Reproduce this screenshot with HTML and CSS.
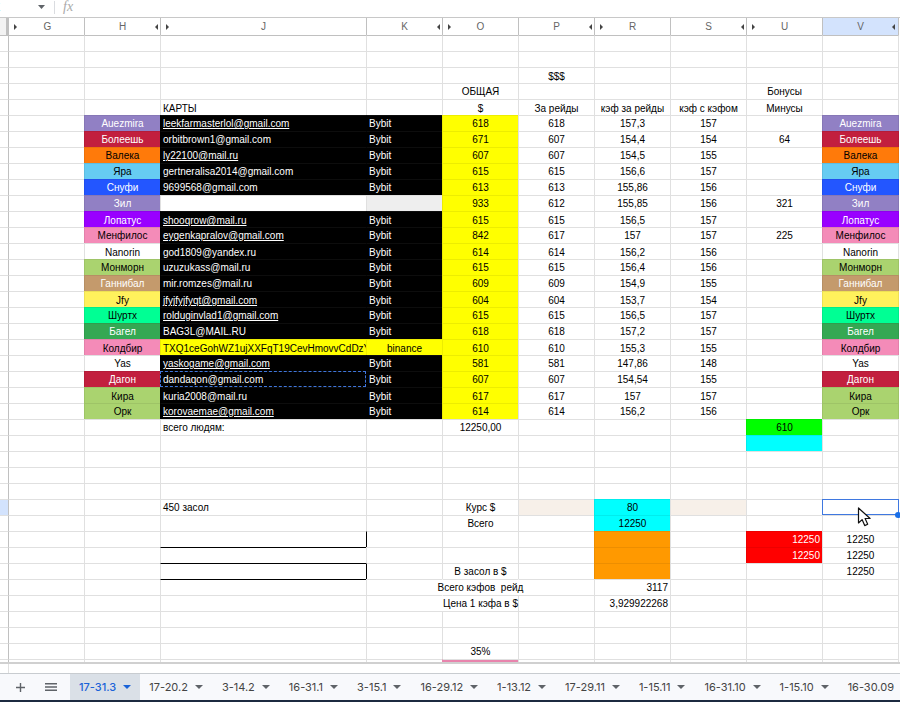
FILE: index.html
```html
<!DOCTYPE html>
<html lang="ru">
<head>
<meta charset="utf-8">
<title>Таблица</title>
<link rel="stylesheet" href="styles.css">
</head>
<body>
<header class="formula">
  <span class="cellname">E</span>
  <svg class="drop" width="7" height="4" viewBox="0 0 7 4"><path d="M0 0h7L3.5 4z"/></svg>
  <span class="sep"></span>
  <span class="fx">fx</span>
</header>
<main class="sheet">
<table>
<colgroup><col class="c0"><col class="cn"><col class="cn"><col class="cj"><col class="cn"><col class="cn"><col class="cn"><col class="cn"><col class="cn"><col class="cn"><col class="cv"></colgroup>
<thead><tr><th class="corner"></th><th class="ar5">G</th><th class="al">H</th><th class="ar">J</th><th class="al">K</th><th class="ar">O</th><th class="al">P</th><th class="ar">R</th><th class="al">S</th><th class="ar">U</th><th class="al selh">V</th></tr></thead>
<tbody>
<tr><td class="rh"><td><td><td><td><td><td><td><td><td><td class="vc"></tr>
<tr><td class="rh"><td><td><td><td><td><td><td><td><td><td class="vc"></tr>
<tr class="low"><td class="rh"><td><td><td><td><td><td>$$$<td><td><td><td class="vc"></tr>
<tr><td class="rh"><td><td><td><td><td>ОБЩАЯ<td><td><td><td>Бонусы<td class="vc"></tr>
<tr class="low"><td class="rh"><td><td><td class="l">КАРТЫ<td><td>$<td>За рейды<td>кэф за рейды<td>кэф с кэфом<td>Минусы<td class="vc"></tr>
<tr><td class="rh"><td><td class="purple">Auezmira<td class="k l"><u>leekfarmasterlol@gmail.com</u><td class="k l">Bybit<td class="y">618<td>618<td>157,3<td>157<td><td class="vc purple">Auezmira</tr>
<tr><td class="rh"><td><td class="crimson">Болеешь<td class="k l">orbitbrown1@gmail.com<td class="k l">Bybit<td class="y">671<td>607<td>154,4<td>154<td>64<td class="vc crimson">Болеешь</tr>
<tr><td class="rh"><td><td class="orange">Валека<td class="k l"><u>ly22100@mail.ru</u><td class="k l">Bybit<td class="y">607<td>607<td>154,5<td>155<td><td class="vc orange">Валека</tr>
<tr><td class="rh"><td><td class="sky">Яра<td class="k l">gertneralisa2014@gmail.com<td class="k l">Bybit<td class="y">615<td>615<td>156,6<td>157<td><td class="vc sky">Яра</tr>
<tr><td class="rh"><td><td class="blue">Снуфи<td class="k l">9699568@gmail.com<td class="k l">Bybit<td class="y">613<td>613<td>155,86<td>156<td><td class="vc blue">Снуфи</tr>
<tr><td class="rh"><td><td class="purple">Зил<td class="blank"><td class="grey"><td class="y">933<td>612<td>155,85<td>156<td>321<td class="vc purple">Зил</tr>
<tr class="low"><td class="rh"><td><td class="violet">Лопатус<td class="k l"><u>shooqrow@mail.ru</u><td class="k l">Bybit<td class="y">615<td>615<td>156,5<td>157<td><td class="vc violet">Лопатус</tr>
<tr><td class="rh"><td><td class="pink">Менфилос<td class="k l"><u>eygenkapralov@gmail.com</u><td class="k l">Bybit<td class="y">842<td>617<td>157<td>157<td>225<td class="vc pink">Менфилос</tr>
<tr class="low"><td class="rh"><td><td>Nanorin<td class="k l">god1809@yandex.ru<td class="k l">Bybit<td class="y">614<td>614<td>156,2<td>156<td><td class="vc">Nanorin</tr>
<tr><td class="rh"><td><td class="green">Монморн<td class="k l">uzuzukass@mail.ru<td class="k l">Bybit<td class="y">615<td>615<td>156,4<td>156<td><td class="vc green">Монморн</tr>
<tr><td class="rh"><td><td class="tan">Ганнибал<td class="k l">mir.romzes@mail.ru<td class="k l">Bybit<td class="y">609<td>609<td>154,9<td>155<td><td class="vc tan">Ганнибал</tr>
<tr class="low"><td class="rh"><td><td class="lemon">Jfy<td class="k l"><u>jfyjfyjfyqt@gmail.com</u><td class="k l">Bybit<td class="y">604<td>604<td>153,7<td>154<td><td class="vc lemon">Jfy</tr>
<tr><td class="rh"><td><td class="mint">Шуртх<td class="k l"><u>rolduginvlad1@gmail.com</u><td class="k l">Bybit<td class="y">615<td>615<td>156,5<td>157<td><td class="vc mint">Шуртх</tr>
<tr><td class="rh"><td><td class="leaf">Багел<td class="k l">BAG3L@MAIL.RU<td class="k l">Bybit<td class="y">618<td>618<td>157,2<td>157<td><td class="vc leaf">Багел</tr>
<tr class="low"><td class="rh"><td><td class="pink">Колдбир<td class="y l">TXQ1ceGohWZ1ujXXFqT19CevHmovvCdDzY<td class="y">binance<td class="y">610<td>610<td>155,3<td>155<td><td class="vc pink">Колдбир</tr>
<tr><td class="rh"><td><td>Yas<td class="k l"><u>yaskogame@gmail.com</u><td class="k l">Bybit<td class="y">581<td>581<td>147,86<td>148<td><td class="vc">Yas</tr>
<tr><td class="rh"><td><td class="crimson">Дагон<td class="k l dash">dandaqon@gmail.com<td class="k l">Bybit<td class="y">607<td>607<td>154,54<td>155<td><td class="vc crimson">Дагон</tr>
<tr class="low"><td class="rh"><td><td class="green">Кира<td class="k l">kuria2008@mail.ru<td class="k l">Bybit<td class="y">617<td>617<td>157<td>157<td><td class="vc green">Кира</tr>
<tr><td class="rh"><td><td class="green">Орк<td class="k l"><u>korovaemae@gmail.com</u><td class="k l">Bybit<td class="y">614<td>614<td>156,2<td>156<td><td class="vc green">Орк</tr>
<tr><td class="rh"><td><td><td class="l">всего людям:<td><td>12250,00<td><td><td><td class="lime">610<td class="vc"></tr>
<tr><td class="rh"><td><td><td><td><td><td><td><td><td class="cyan"><td class="vc"></tr>
<tr><td class="rh"><td><td><td><td><td><td><td><td><td><td class="vc"></tr>
<tr><td class="rh"><td><td><td><td><td><td><td><td><td><td class="vc"></tr>
<tr><td class="rh"><td><td><td><td><td><td><td><td><td><td class="vc"></tr>
<tr><td class="rh selr"><td><td><td class="l">450 засол<td><td>Курс $<td class="beige"><td class="cyan">80<td class="beige"><td><td class="vc sel"><span class="handle"></span><svg class="cursor" width="14" height="20" viewBox="0 0 14 20"><path d="M1.5 1v15l3.6-3.4 2.6 6 3-1.3-2.6-5.8h5z"/></svg></tr>
<tr><td class="rh"><td><td><td><td><td>Всего<td><td class="cyan">12250<td><td><td class="vc"></tr>
<tr><td class="rh"><td><td><td><td class="lb"><td><td><td class="amber"><td><td class="red r">12250<td class="vc">12250</tr>
<tr><td class="rh"><td><td><td class="tb"><td><td><td><td class="amber"><td><td class="red r">12250<td class="vc">12250</tr>
<tr><td class="rh"><td><td><td class="tb"><td class="lb"><td>В засол в $<td><td class="amber"><td><td><td class="vc">12250</tr>
<tr><td class="rh"><td><td><td class="tb"><td><td class="nl wide"><span class="over">Всего кэфов&nbsp; рейд</span><td class="nl"><td class="r">3117<td><td><td class="vc"></tr>
<tr><td class="rh"><td><td><td><td><td class="nl wide"><span class="over">Цена 1 кэфа в $</span><td><td class="r">3,929922268<td><td><td class="vc"></tr>
<tr><td class="rh"><td><td><td><td><td><td><td><td><td><td class="vc"></tr>
<tr><td class="rh"><td><td><td><td><td><td><td><td><td><td class="vc"></tr>
<tr><td class="rh"><td><td><td><td><td>35%<td><td><td><td><td class="vc"></tr>
<tr><td class="rh"><td><td><td><td><td class="rose"><td><td><td><td><td class="vc"></tr>
</tbody>
</table>
</main>
<div class="scroll"><span class="thumb"></span></div>
<nav class="tabs">
  <span class="btn plus"><svg width="9" height="9" viewBox="0 0 9 9"><path d="M4.5 0v9M0 4.5h9"/></svg></span>
  <span class="btn menu"><svg width="12" height="8" viewBox="0 0 12 8"><path d="M0 .75h12M0 4h12M0 7.25h12"/></svg></span>
  <span class="tab active">17-31.3<i></i></span>
  <span class="tab">17-20.2<i></i></span>
  <span class="tab">3-14.2<i></i></span>
  <span class="tab">16-31.1<i></i></span>
  <span class="tab">3-15.1<i></i></span>
  <span class="tab">16-29.12<i></i></span>
  <span class="tab">1-13.12<i></i></span>
  <span class="tab">17-29.11<i></i></span>
  <span class="tab">1-15.11<i></i></span>
  <span class="tab">16-31.10<i></i></span>
  <span class="tab">1-15.10<i></i></span>
  <span class="tab">16-30.09</span>
</nav>
<div class="strip"></div>
</body>
</html>
```
FILE: styles.css
```css
* { box-sizing: border-box; }
html, body { margin: 0; height: 702px; overflow: hidden; background: #fff; }
body { display: flex; flex-direction: column; font-family: "Liberation Sans", Arial, sans-serif; font-size: 10px; color: #000; }

.formula { height: 18px; flex: none; display: flex; align-items: center; border-bottom: 1px solid #c8c8c8; overflow: hidden; }
.cellname { color: #1a73e8; font-size: 11px; margin-left: -7px; width: 45px; padding-bottom: 3px; }
.drop { fill: #5f6368; margin: 0 0 3px 0; flex: none; }
.sep { width: 1px; height: 13px; background: #dadce0; margin: 0 0 2px 9px; }
.fx { font-family: "Liberation Serif", serif; font-style: italic; font-size: 14px; color: #aaa; margin: 0 0 3px 8px; }

.sheet { height: 644px; flex: none; overflow: hidden; position: relative; }
table { border-collapse: separate; border-spacing: 0; table-layout: fixed; width: 899px; }
.c0 { width: 8px; }
.cn { width: 76px; }
.cj { width: 206px; }
.cv { width: 77px; }

th { height: 17px; padding: 0; position: relative; font-weight: 400; font-size: 10px; color: #666; border-left: 1px solid #c0c0c0; line-height: 14px; vertical-align: middle; }
th.corner { border-left: 0; background: #f3f3f3; border-right: 2px solid #c0c0c0; }
th.selh { background: #d3e3fd; border-right: 1px solid #c0c0c0; }
.ar::before, .ar5::before, .al::after { content: ""; position: absolute; top: 6px; border: 3px solid transparent; border-left-width: 0; border-right-width: 0; }
.ar::before, .ar5::before { border-left: 3px solid #444; }
.al::after { border-right: 3px solid #444; right: 2px; }
.ar::before { left: 5px; }
.ar5::before { left: 5px; }
.ar5 { padding-left: 2px; }
.selh.al::after { right: 3px; }

td { height: 16px; padding: 0 2px; border-top: 1px solid #e0e0e0; border-left: 1px solid #e0e0e0; text-align: center; white-space: nowrap; overflow: hidden; line-height: 15px; vertical-align: top; font-size: 10px; }
tbody tr:first-child td { border-top-color: #c0c0c0; }
td.rh { padding: 0; border-left: 0; }
td.rh + td { border-left-color: #c0c0c0; }
td.selr { background: #d3e3fd; }
td.vc { border-right: 1px solid #e0e0e0; }
.l { text-align: left; }
td.r { text-align: right; }
tr.low td { padding-top: 2px; line-height: 13px; }

.purple, .crimson, .orange, .sky, .blue, .violet, .pink, .green, .tan, .lemon, .mint, .leaf, .y, .k, .lime, .cyan, .amber, .red { border-top-color: rgba(0,0,0,.07); border-left-color: rgba(0,0,0,.07); }
td.vc.purple, td.vc.crimson, td.vc.orange, td.vc.sky, td.vc.blue, td.vc.violet, td.vc.pink, td.vc.green, td.vc.tan, td.vc.lemon, td.vc.mint, td.vc.leaf { border-right-color: rgba(0,0,0,.07); }
.purple { background: #9180c4; color: #fff; }
.crimson { background: #c21f3e; color: #fff; }
.orange { background: #ff7a0a; }
.sky { background: #66ccf2; }
.blue { background: #2356ff; color: #fff; }
.violet { background: #9900ff; color: #fff; }
.pink { background: #f48bb8; }
.green { background: #aad36f; }
.tan { background: #c49a6c; color: #fff; }
.lemon { background: #fff15c; }
.mint { background: #00ff94; }
.leaf { background: #34a853; color: #fff; }
.k { background: #000; color: #fff; border-top-color: #0d0d0d; border-left-color: #000; }
.y { background: #ff0; }
.lime { background: #0f0; }
.cyan { background: #0ff; }
.amber { background: #f90; }
.red { background: #f00; color: #fff; }
.grey { background: #eee; border-top-color: #e0e0e0; }
.blank { background: #fff; }
.beige { background: #f7f0e9; }
.rose { background: #e884ad; border-left-color: #e884ad; }
.lb { border-left-color: #000; }
.tb { border-top-color: #000; }
td.nl { border-left-color: transparent; }

td.dash { overflow: visible; outline: 1px dashed #3f76dc; outline-offset: -1px; position: relative; }
td.sel { overflow: visible; position: relative; outline: 1.5px solid #3f78e0; outline-offset: -1px; z-index: 2; }
td.wide { overflow: visible; }
.over { display: block; margin: 0 -20px; }
.handle { position: absolute; right: -3px; bottom: -3px; width: 6px; height: 6px; border-radius: 50%; background: #1a6fe8; }
.cursor { position: absolute; left: 34px; top: 7px; fill: #fff; stroke: #111; stroke-width: 1.2; stroke-linejoin: round; }

.scroll { height: 12px; flex: none; border-top: 2px solid #d0d0d0; border-bottom: 1px solid #c8ccd0; background: #fff; padding-left: 8px; }
.thumb { display: block; width: 1px; height: 100%; background: #e0e0e0; }

.tabs { height: 26px; flex: none; background: #f8f9fc; display: flex; align-items: stretch; overflow: hidden; }
.btn { display: flex; align-items: center; justify-content: center; flex: none; }
.btn svg { fill: none; stroke: #5f6368; stroke-width: 1.4; }
.plus { width: 40px; }
.menu { width: 22px; margin-right: 8px; }
.tab { display: flex; align-items: center; flex: none; padding: 0 10px 0 9px; font-family: Inter, Roboto, "Liberation Sans", sans-serif; font-size: 11px; font-weight: 400; color: #444; white-space: nowrap; }
.tab i { display: block; width: 0; height: 0; margin-left: 7px; border: 4px solid transparent; border-top-color: #5f6368; border-bottom: 0; }
.tab.active { background: #dae0e7; color: #1a63d8; font-weight: 500; padding-right: 9px; }
.tab.active i { border-top-color: #1a63d8; }

.strip { flex: 1; background: #1c2a40; }
```
